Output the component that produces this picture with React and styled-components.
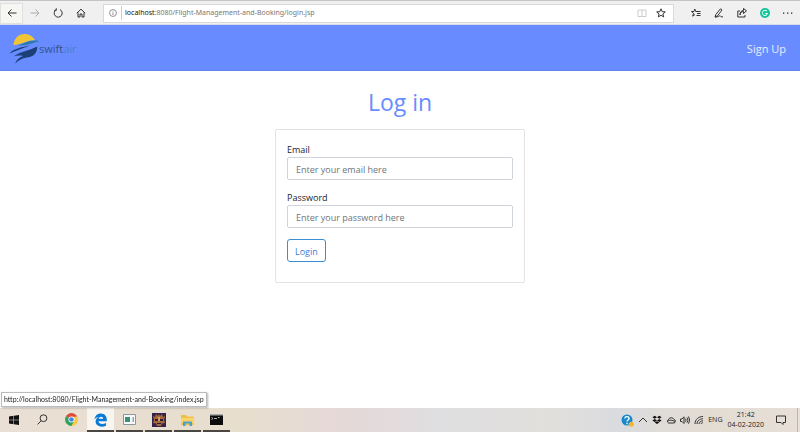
import React, { useState } from "react";
import styled, { createGlobalStyle, css } from "styled-components";

const GlobalStyle = createGlobalStyle`
  * {
    box-sizing: border-box;
  }
  body {
    margin: 0;
    background: #fff;
    color: #212529;
    font-family: "Open Sans", "Noto Sans", sans-serif;
  }
  button, input {
    font-family: inherit;
  }
`;

const Screen = styled.div`
  display: flex;
  flex-direction: column;
  min-height: 100vh;
`;

/* Browser toolbar */
const Toolbar = styled.header`
  display: flex;
  align-items: center;
  height: 25px;
  padding: 2px 1px 1px 0;
  background: #f0f0f0;
  border-top: 1px solid #c4c4c4;
  border-bottom: 1px solid #d8dce4;
`;

const ToolButton = styled.button`
  display: flex;
  align-items: center;
  justify-content: center;
  width: 23px;
  height: 21px;
  padding: 0;
  border: 1px solid ${({ $active }) => ($active ? "#e0e0e0" : "transparent")};
  background: ${({ $active }) => ($active ? "#f6f6f3" : "transparent")};
`;

const AddressBar = styled.div`
  display: flex;
  flex: 1;
  align-items: center;
  height: 19px;
  margin: 0 10px 0 11px;
  padding: 0 7px 0 5px;
  background: #fff;
  border: 1px solid #d9d9d9;
`;

const Divider = styled.span`
  width: 1px;
  height: 14px;
  margin: 0 3px 0 4px;
  background: #ccc;
`;

const Url = styled.div`
  flex: 1;
  color: #777;
  font-family: "Noto Sans", sans-serif;
  font-size: 7px;
  line-height: 12px;
  white-space: nowrap;

  span {
    color: #111;
  }
`;

const AddressIcons = styled.div`
  display: flex;
  gap: 9px;
`;

/* Site header */
const NavBar = styled.nav`
  display: flex;
  align-items: center;
  justify-content: space-between;
  height: 46px;
  padding: 2px 14px 0 9px;
  background: #688cff;
  border-bottom: 1px solid #6384ee;
`;

const Brand = styled.a`
  display: flex;
  align-items: center;
  color: #33508f;
  font-size: 11px;
  line-height: 16px;
  text-decoration: none;

  em {
    color: #4a80cf;
    font-style: normal;
  }
`;

const NavLink = styled.a`
  color: #e8eeff;
  font-size: 11px;
  line-height: 16px;
  text-decoration: none;
`;

/* Login form */
const Main = styled.main`
  flex: 1;
  padding: 14px 16px;
`;

const Title = styled.h1`
  margin: 0 0 10px;
  color: #688cff;
  font-size: 23px;
  font-weight: 400;
  line-height: 34px;
  text-align: center;
`;

const Card = styled.form`
  max-width: 250px;
  margin: 0 auto;
  padding: 13px 11px 20px;
  border: 1px solid #e3e3e3;
  border-radius: 2px;
`;

const Field = styled.div`
  margin-bottom: 11px;
`;

const Label = styled.label`
  display: block;
  font-size: 9px;
  line-height: 14px;
`;

const TextInput = styled.input`
  display: block;
  width: 100%;
  height: 23px;
  padding: 1px 8px 0;
  border: 1px solid #ced4da;
  border-radius: 2px;
  font-size: 9px;

  &::placeholder {
    color: #6c757d;
    opacity: 1;
  }
`;

const LoginButton = styled.button`
  display: block;
  height: 23px;
  padding: 1px 7px 0;
  border: 1px solid #3b8fd0;
  border-radius: 3px;
  background: #fff;
  color: #3b7de0;
  font-size: 9px;
`;

const StatusTip = styled.div`
  position: fixed;
  bottom: 25px;
  left: 1px;
  padding: 0 2px;
  background: #fff;
  border: 1px solid #bbb;
  box-shadow: 1px 1px 2px rgba(0, 0, 0, 0.3);
  color: #222;
  font-family: Lato, sans-serif;
  font-size: 7px;
  line-height: 13px;
  white-space: nowrap;
`;

/* Windows taskbar */
const Taskbar = styled.footer`
  display: flex;
  justify-content: space-between;
  height: 24px;
  background: linear-gradient(90deg, #e9dfd4, #e8dece 30%, #e5d8d8 43%, #dfdee0 55%, #e2e0dd 68%, #dadbdf 77%, #e3dcd3 88%, #e8e0d8);
`;

const Apps = styled.div`
  display: flex;
  gap: 2px;
`;

const AppButton = styled.button`
  display: flex;
  align-items: center;
  justify-content: center;
  width: 27px;
  padding: 1px 0 0;
  border: 0;
  border-bottom: 2px solid transparent;
  background: none;
  ${({ $running }) => $running && css`border-bottom-color: #4a4642;`}
  ${({ $active }) => $active && css`background: #f8f5f1;`}
`;

const Tray = styled.div`
  display: flex;
  align-items: center;
  gap: 4px;
  padding-right: 2px;
  color: #222;
  font-size: 7px;
  line-height: 10px;
`;

const Clock = styled.time`
  margin: 0 8px 0 1px;
  text-align: center;
`;

const TrayEdge = styled.span`
  align-self: stretch;
  width: 1px;
  margin-left: 7px;
  background: #bdb6ae;
`;

const LineSvg = styled.svg`
  display: block;
  flex: none;
  fill: none;
  stroke: ${({ $color }) => $color || "#333"};
`;

const Line = ({ d, ...rest }) => (
  <LineSvg width="10" height="10" viewBox="0 0 10 10" aria-hidden="true" {...rest}>
    <path d={d} />
  </LineSvg>
);

const PATHS = {
  back: "M9.5 5H1M4.5 1.5L1 5l3.5 3.5",
  forward: "M.5 5H9M5.5 1.5L9 5 5.5 8.5",
  reload: "M3 1.8A4 4 0 1 0 7 1.6M3.3 .3V2.3H1.2",
  home: "M.8 5.2L5 1.2l4.2 4M2 4.5V9h2V6h2v3h2V4.5",
  book: "M5 2H1v6.5h8V2H5v6.5",
  star: "M5 .8l1.2 2.9 3.1.2-2.4 2 .8 3L5 7.3 2.3 8.9l.8-3-2.4-2 3.1-.2z",
  favourites: "M9.5 3.5H4.7L3.8 1l-.9 2.5H.5l2 1.7-.8 3L4 6.5M6 5.5h3.5M5.5 7.5h4",
  pen: "M1 9l.8-2.5L6.5.8 8 2 3.5 7.8 1 9c3 .5 4-1.5 5-1.2s.5 1.4 3 1",
  share: "M3 3H.8v6H8V7M3 7c0-2.5 1.5-3.5 3.5-3.5v2l3-2.7L6.5.5v2C4.5 2.5 3 4 3 7z",
  caret: "M1 7l4-4 4 4",
  cloud: "M2.5 8a2 2 0 0 1 0-3.5A3 3 0 0 1 8 4.5a1.8 1.8 0 0 1 0 3.5zM1.5 6.2C4 4.5 6 5 9 6.5",
  speaker: "M.5 4v2.5H2L4 8.5V1.8L2 4zM5.5 3.7q1 1.5 0 3M7 2.5q2 2.7 0 5.2M8.5 1.5q2.5 3.7 0 7.2",
  wifi: "M1 9C1 4.5 4.5 1.5 9 1.5M3 9C3 6 5.5 3.8 9 3.8M5 9c0-2 2-3.2 4-3.2M7 9c0-.8 1-1.3 2-1.3",
  note: "M.5 1h9v6.5H7V9.5L5 7.5H.5z",
};

const SwiftLogo = () => (
  <svg width="30" height="32" viewBox="0 0 30 32" aria-hidden="true">
    <path d="M4.5 12C5 5.500 9.500 1 15.500 1c5 0 8.700 2.500 10.500 6.300C18 6.500 14 11.500 4.500 12z" fill="#f2c536" />
    <path d="M8 12.300c7-1 9.500-4.800 19-4.800 1.500 0 3 .4 4 .9-5 .2-11 4.800-23 3.900z" fill="#2b7bb0" />
    <path d="M.3 20.500C5 15.500 13 14 21 12.500 14 15.500 7 17.500.3 20.500z" fill="#1d3f78" />
    <path d="M6 30.500c1.500-3.500 4-6 8-7.500-3-.8-6-.6-9 .2 7-5.200 16-5.700 23.200-9.700.3 5.500-3 10-8.700 10.700C14 25 10.500 26.500 6 30.500z" fill="#1d3f78" />
  </svg>
);

const InfoIcon = () => (
  <LineSvg width="8" height="8" viewBox="0 0 10 10" $color="#777" aria-hidden="true">
    <circle cx="5" cy="5" r="4.3" />
    <path d="M5 4.3V7.5M5 2.3v1" />
  </LineSvg>
);

const GrammarlyIcon = () => (
  <svg width="10" height="10" viewBox="0 0 10 10" aria-hidden="true">
    <circle cx="5" cy="5" r="5" fill="#15c39a" />
    <path d="M7 3.3A2.6 2.6 0 1 0 7.500 5.500H5.300" fill="none" stroke="#fff" />
  </svg>
);

const DotsIcon = () => (
  <svg width="10" height="10" viewBox="0 0 10 10" aria-hidden="true">
    <path d="M0 4.5h1.3v1.3H0zM4 4.5h1.3v1.3H4zM8 4.5h1.3v1.3H8z" fill="#222" />
  </svg>
);

const WindowsIcon = () => (
  <svg width="10" height="10" viewBox="0 0 10 10" aria-hidden="true">
    <path d="M0 1.5l4.5-.7v4H0zM5 .7l5-.7v4.8H5zM0 5.3h4.5v4L0 8.6zM5 5.3h5V10l-5-.7z" fill="#111" />
  </svg>
);

const SearchIcon = () => (
  <LineSvg width="11" height="11" viewBox="0 0 11 11" aria-hidden="true">
    <circle cx="6.5" cy="4.2" r="3.4" />
    <path d="M4.2 6.7L.6 10.4" />
  </LineSvg>
);

const ChromeIcon = () => (
  <svg width="13" height="13" viewBox="0 0 14 14" aria-hidden="true">
    <path d="M7 7L1 3.5A7 7 0 0 1 13 3.5z" fill="#e04a3a" />
    <path d="M7 7L1 3.5A7 7 0 0 0 7 14l3.5-5z" fill="#2ca25a" />
    <path d="M7 4h6.3A7 7 0 0 1 7 14l3-6z" fill="#f7cb3c" />
    <circle cx="7" cy="7" r="3.3" fill="#fff" />
    <circle cx="7" cy="7" r="2.5" fill="#4284f0" />
  </svg>
);

const EdgeIcon = () => (
  <svg width="13" height="14" viewBox="0 0 13 14" aria-hidden="true">
    <path d="M.5 6.5C1 2.5 3.5.5 6.8.5c4 0 6 3 6 6.2v1.6H4.5c.2 3 4.5 3.5 7.5 1.7v2.8C7 15 1.5 13 1.6 8.5c.1-2 1.2-3.6 3.2-4.5C2.8 4.2 1.5 5 .5 6.5zM4.7 5.8h4.5C9.2 3 5.2 3 4.7 5.8z" fill="#087bd6" />
  </svg>
);

const WindowIcon = () => (
  <svg width="13" height="11" viewBox="0 0 13 11" aria-hidden="true">
    <path d="M.5.5h12v10H.5z" fill="#f6f8f8" stroke="#8b979b" />
    <path d="M2 3h5v5H2z" fill="#3b8d7c" />
    <path d="M9.5 3H11v5H9.5z" fill="#8fa9b0" />
  </svg>
);

const CrestIcon = () => (
  <svg width="14" height="14" viewBox="0 0 14 14" aria-hidden="true">
    <path d="M0 0h14v14H0z" fill="#33234a" />
    <path d="M1 3l2 1 1-3 2 2 1-2 1 2 2-2 1 3 2-1-1 4 1 3-3 .5L9 13H5l-1-2.5L1 10l1-3z" fill="#a5673a" />
    <path d="M3 6h3v2H3zM8 6h3v2H8zM5 10h4v1H5z" fill="#2b1c34" />
    <path d="M6 4h2v4H6z" fill="#d0a068" />
  </svg>
);

const FolderIcon = () => (
  <svg width="13" height="12" viewBox="0 0 13 12" aria-hidden="true">
    <path d="M0 1h5l1 1.5h6.5V11H0z" fill="#eec04a" />
    <path d="M0 4h12.5v5H0z" fill="#f8d566" />
    <path d="M2 12V7.5h9V12H8.5V9.5h-4V12z" fill="#4aa3c6" />
  </svg>
);

const TerminalIcon = () => (
  <svg width="13" height="11" viewBox="0 0 13 11" aria-hidden="true">
    <path d="M0 0h13v11H0z" fill="#0c0c0c" />
    <path d="M0 0h13v1.5H0z" fill="#aaa" />
    <path d="M1.5 3.5L3 4.5l-1.5 1M4 4.5h3M8 3.5h1.5" stroke="#ddd" strokeWidth=".8" fill="none" />
  </svg>
);

const HelpIcon = () => (
  <svg width="13" height="13" viewBox="0 0 13 13" aria-hidden="true">
    <circle cx="6" cy="6" r="5.5" fill="#1688c9" />
    <path d="M3.8 4.5C4 2 8.5 2 8 4.8 7.8 6 6 6 6 7.5M6 8.8v1.5" stroke="#fff" strokeWidth="1.4" fill="none" />
    <circle cx="10.3" cy="10.3" r="2.5" fill="#f1b632" />
  </svg>
);

const DropboxIcon = () => (
  <svg width="10" height="10" viewBox="0 0 10 10" aria-hidden="true">
    <path d="M2.7.8L5 2.3 2.7 3.8.4 2.3zM7.3.8l2.3 1.5-2.3 1.5L5 2.3zM2.7 3.9L5 5.4 2.7 6.9.4 5.4zM7.3 3.9l2.3 1.5-2.3 1.5L5 5.4zM5 6.2l2.3 1.4L5 9.1 2.7 7.6z" fill="#111" />
  </svg>
);

const App = () => {
  const [form, setForm] = useState({ email: "", password: "" });
  const onChange = (e) => setForm({ ...form, [e.target.name]: e.target.value });

  return (
    <Screen>
      <GlobalStyle />
      <Toolbar>
        <ToolButton $active aria-label="Back"><Line d={PATHS.back} /></ToolButton>
        <ToolButton aria-label="Forward"><Line d={PATHS.forward} $color="#aaa" /></ToolButton>
        <ToolButton aria-label="Refresh"><Line d={PATHS.reload} /></ToolButton>
        <ToolButton aria-label="Home"><Line d={PATHS.home} /></ToolButton>
        <AddressBar>
          <InfoIcon />
          <Divider />
          <Url><span>localhost</span>:8080/Flight-Management-and-Booking/login.jsp</Url>
          <AddressIcons>
            <Line d={PATHS.book} $color="#ccc" />
            <Line d={PATHS.star} />
          </AddressIcons>
        </AddressBar>
        <ToolButton aria-label="Favourites"><Line d={PATHS.favourites} /></ToolButton>
        <ToolButton aria-label="Add notes"><Line d={PATHS.pen} /></ToolButton>
        <ToolButton aria-label="Share"><Line d={PATHS.share} /></ToolButton>
        <ToolButton aria-label="Grammarly"><GrammarlyIcon /></ToolButton>
        <ToolButton aria-label="More"><DotsIcon /></ToolButton>
      </Toolbar>

      <NavBar>
        <Brand href="#home">
          <SwiftLogo />
          <span>swift<em>air</em></span>
        </Brand>
        <NavLink href="#signup">Sign Up</NavLink>
      </NavBar>

      <Main>
        <Title>Log in</Title>
        <Card onSubmit={(e) => e.preventDefault()}>
          <Field>
            <Label htmlFor="email">Email</Label>
            <TextInput
              id="email"
              name="email"
              type="email"
              placeholder="Enter your email here"
              value={form.email}
              onChange={onChange}
            />
          </Field>
          <Field>
            <Label htmlFor="password">Password</Label>
            <TextInput
              id="password"
              name="password"
              type="password"
              placeholder="Enter your password here"
              value={form.password}
              onChange={onChange}
            />
          </Field>
          <LoginButton type="submit">Login</LoginButton>
        </Card>
      </Main>

      <StatusTip>http://localhost:8080/Flight-Management-and-Booking/index.jsp</StatusTip>

      <Taskbar>
        <Apps>
          <AppButton aria-label="Start"><WindowsIcon /></AppButton>
          <AppButton aria-label="Search"><SearchIcon /></AppButton>
          <AppButton aria-label="Chrome"><ChromeIcon /></AppButton>
          <AppButton aria-label="Edge" $running $active><EdgeIcon /></AppButton>
          <AppButton aria-label="Window" $running><WindowIcon /></AppButton>
          <AppButton aria-label="Game" $running><CrestIcon /></AppButton>
          <AppButton aria-label="Files" $running><FolderIcon /></AppButton>
          <AppButton aria-label="Terminal" $running><TerminalIcon /></AppButton>
        </Apps>
        <Tray>
          <HelpIcon />
          <Line d={PATHS.caret} />
          <DropboxIcon />
          <Line d={PATHS.cloud} />
          <Line d={PATHS.speaker} />
          <Line d={PATHS.wifi} />
          <span>ENG</span>
          <Clock>21:42<br />04-02-2020</Clock>
          <Line d={PATHS.note} />
          <TrayEdge />
        </Tray>
      </Taskbar>
    </Screen>
  );
};

export default App;
